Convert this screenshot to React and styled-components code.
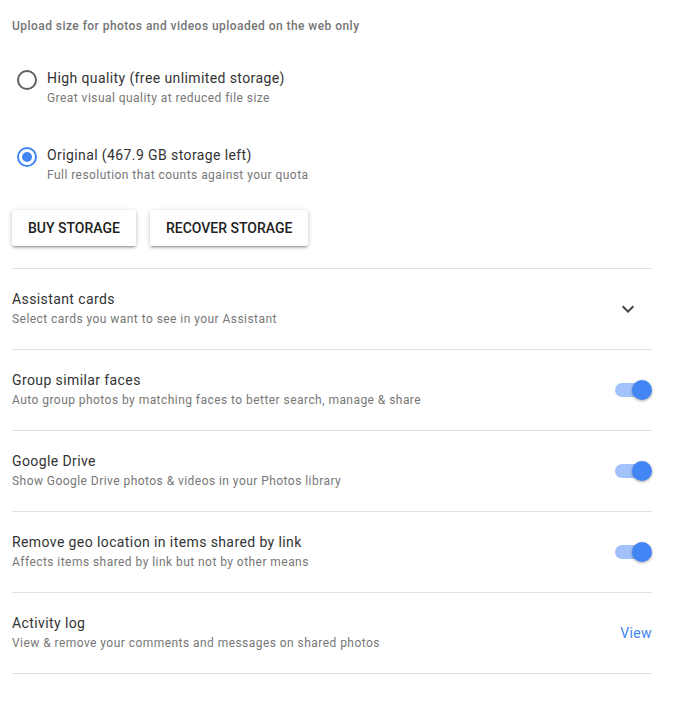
import React, { useState } from 'react'
import styled, { createGlobalStyle } from 'styled-components'

const GlobalStyle = createGlobalStyle`
  body {
    margin: 0;
    background: #fff;
    font-family: Roboto, "Liberation Sans", Arial, sans-serif;
  }
`

const uploadOptions = [
  { id: 'high', title: 'High quality (free unlimited storage)', sub: 'Great visual quality at reduced file size' },
  { id: 'original', title: 'Original (467.9 GB storage left)', sub: 'Full resolution that counts against your quota' },
]

const settings = [
  { title: 'Assistant cards', sub: 'Select cards you want to see in your Assistant', action: 'expand' },
  { title: 'Group similar faces', sub: 'Auto group photos by matching faces to better search, manage & share', action: 'toggle' },
  { title: 'Google Drive', sub: 'Show Google Drive photos & videos in your Photos library', action: 'toggle' },
  { title: 'Remove geo location in items shared by link', sub: 'Affects items shared by link but not by other means', action: 'toggle' },
  { title: 'Activity log', sub: 'View & remove your comments and messages on shared photos', action: 'link' },
]

const ChevronDown = () => (
  <svg width="24" height="24" viewBox="0 0 24 24">
    <path d="M7.41 8.59L12 13.17l4.59-4.58L18 10l-6 6-6-6 1.41-1.41z" fill="#424242" />
  </svg>
)

export default function App() {
  const [upload, setUpload] = useState('original')

  const renderAction = (action) => {
    if (action === 'expand') return <IconButton><ChevronDown /></IconButton>
    if (action === 'toggle') return <Toggle><Track /><Thumb /></Toggle>
    return <ViewLink>View</ViewLink>
  }

  return (
    <Layout>
      <GlobalStyle />
      <Header>Upload size for photos and videos uploaded on the web only</Header>

      <Options>
        {uploadOptions.map(opt => (
          <Option key={opt.id} onClick={() => setUpload(opt.id)}>
            <Radio checked={upload === opt.id} />
            <div>
              <Title>{opt.title}</Title>
              <Sub>{opt.sub}</Sub>
            </div>
          </Option>
        ))}
      </Options>

      <Buttons>
        <Button>Buy storage</Button>
        <Button>Recover storage</Button>
      </Buttons>

      <List>
        {settings.map(s => (
          <Row key={s.title}>
            <div>
              <Title>{s.title}</Title>
              <Sub>{s.sub}</Sub>
            </div>
            {renderAction(s.action)}
          </Row>
        ))}
      </List>
    </Layout>
  )
}

const Layout = styled.div`
  display: flex;
  flex-direction: column;
  width: 640px;
  margin-left: 12px;
  padding-top: 18px;
`

const Header = styled.div`
  font-size: 12px;
  line-height: 16px;
  font-weight: 500;
  letter-spacing: 0.45px;
  color: #757575;
`

const Options = styled.div`
  display: flex;
  flex-direction: column;
  gap: 37px;
  margin-top: 34px;
`

const Option = styled.div`
  display: flex;
  align-items: flex-start;
  gap: 10px;
  padding-left: 5px;
  cursor: pointer;
`

const Radio = styled.span`
  box-sizing: border-box;
  width: 20px;
  height: 20px;
  margin-top: 2px;
  border-radius: 50%;
  border: 2px solid ${p => (p.checked ? '#4285f4' : '#616161')};
  display: flex;
  align-items: center;
  justify-content: center;
  flex-shrink: 0;

  &::after {
    content: '';
    width: 10px;
    height: 10px;
    border-radius: 50%;
    background: #4285f4;
    display: ${p => (p.checked ? 'block' : 'none')};
  }
`

const Title = styled.div`
  font-size: 14px;
  line-height: 20px;
  letter-spacing: 0.4px;
  color: #333;
`

const Sub = styled.div`
  font-size: 12px;
  line-height: 20px;
  letter-spacing: 0.45px;
  color: #777;
`

const Buttons = styled.div`
  display: flex;
  gap: 14px;
  margin-top: 25px;
`

const Button = styled.button`
  height: 36px;
  padding: 0 16px;
  border: none;
  border-radius: 2px;
  background: #fff;
  font-family: inherit;
  font-size: 14px;
  font-weight: 500;
  text-transform: uppercase;
  color: #212121;
  box-shadow: 0 2px 2px 0 rgba(0, 0, 0, 0.14), 0 3px 1px -2px rgba(0, 0, 0, 0.12), 0 1px 5px 0 rgba(0, 0, 0, 0.2);
`

const List = styled.div`
  display: flex;
  flex-direction: column;
  margin-top: 22px;
  border-top: 1px solid #e0e0e0;
`

const Row = styled.div`
  display: flex;
  align-items: center;
  justify-content: space-between;
  padding: 20px 0;
  border-bottom: 1px solid #e0e0e0;
`

const IconButton = styled.div`
  width: 48px;
  height: 40px;
  display: flex;
  align-items: center;
  justify-content: center;
`

const Toggle = styled.div`
  position: relative;
  width: 37px;
  height: 20px;
`

const Track = styled.div`
  position: absolute;
  left: 0;
  top: 3px;
  width: 34px;
  height: 14px;
  border-radius: 7px;
  background: #a1c2fa;
`

const Thumb = styled.div`
  position: absolute;
  right: 0;
  top: 0;
  width: 20px;
  height: 20px;
  border-radius: 50%;
  background: #4285f4;
  box-shadow: 0 1px 3px rgba(0, 0, 0, 0.35);
`

const ViewLink = styled.a`
  font-size: 14px;
  letter-spacing: 0.4px;
  color: #4285f4;
  cursor: pointer;
`
